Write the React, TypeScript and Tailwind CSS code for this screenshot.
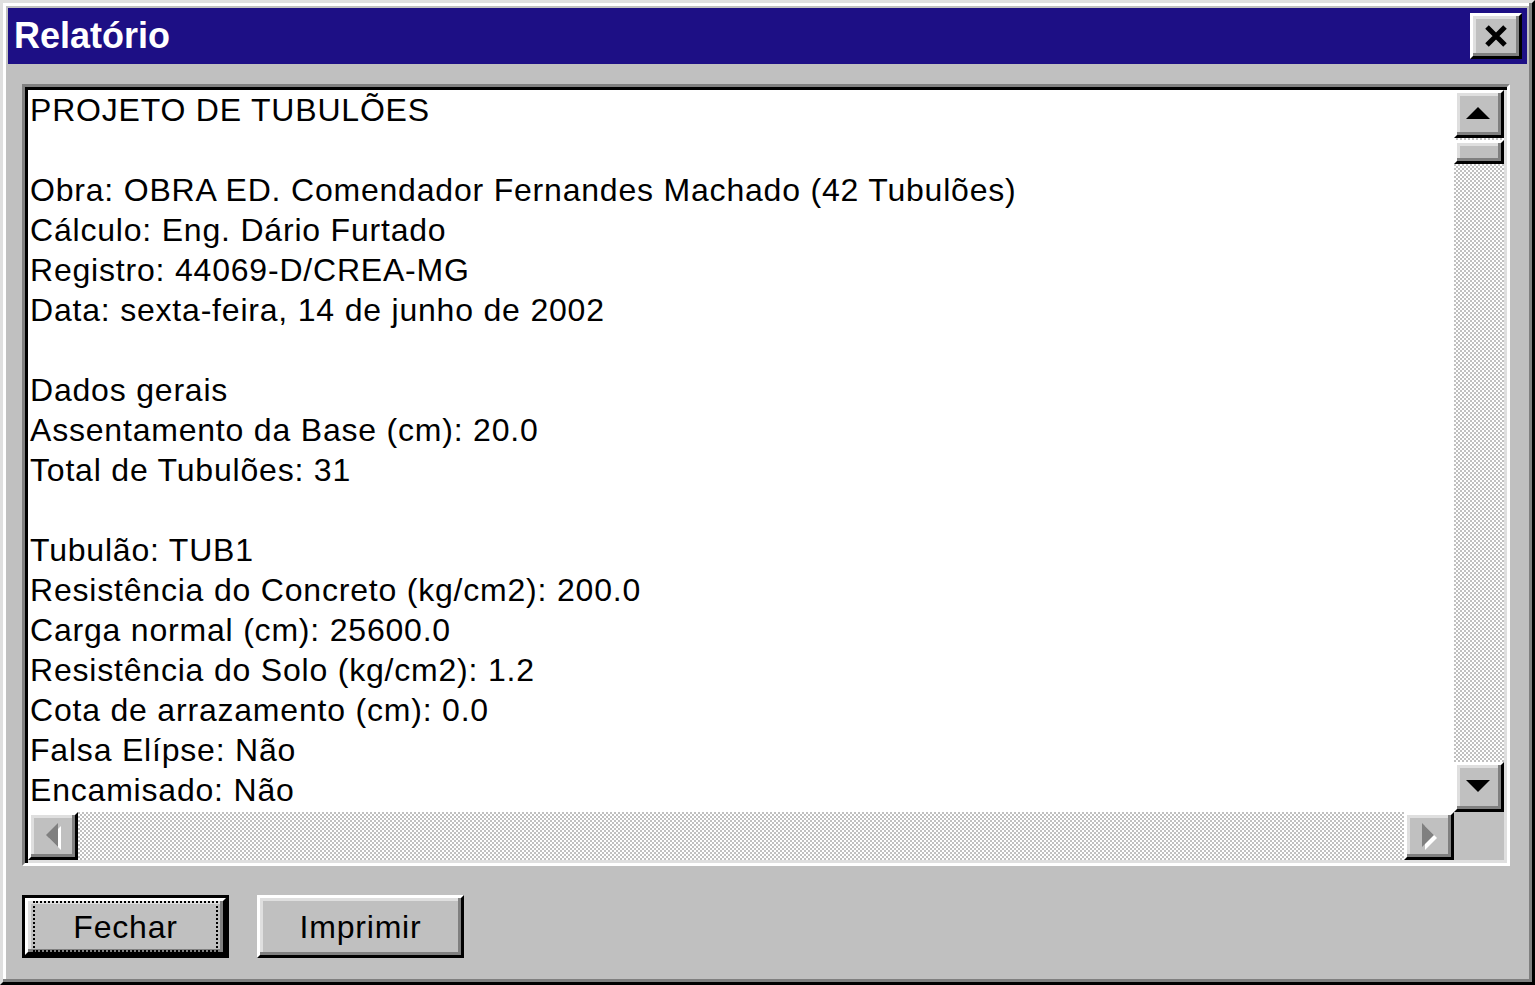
import React from 'react'

const lines = [
  'PROJETO DE TUBULÕES',
  '',
  'Obra: OBRA ED. Comendador Fernandes Machado (42 Tubulões)',
  'Cálculo: Eng. Dário Furtado',
  'Registro: 44069-D/CREA-MG',
  'Data: sexta-feira, 14 de junho de 2002',
  '',
  'Dados gerais',
  'Assentamento da Base (cm): 20.0',
  'Total de Tubulões: 31',
  '',
  'Tubulão: TUB1',
  'Resistência do Concreto (kg/cm2): 200.0',
  'Carga normal (cm): 25600.0',
  'Resistência do Solo (kg/cm2): 1.2',
  'Cota de arrazamento (cm): 0.0',
  'Falsa Elípse: Não',
  'Encamisado: Não',
]

const raised =
  'border-t-[3px] border-l-[3px] border-r-[3px] border-b-[3px] border-t-white border-l-white border-r-black border-b-black bg-[#c0c0c0] shadow-[inset_-3px_-3px_0_#808080,inset_3px_3px_0_#dfdfdf]'

const track = 'bg-[repeating-conic-gradient(#c0c0c0_0_25%,#ffffff_0_50%)] bg-[length:4px_4px]'

function Arrow({ dir, disabled }: { dir: 'up' | 'down' | 'left' | 'right'; disabled?: boolean }) {
  const pts = {
    up: '12,0 24,12 0,12',
    down: '0,0 24,0 12,12',
    left: '12,0 12,24 0,12',
    right: '0,0 12,12 0,24',
  }[dir]
  const vertical = dir === 'up' || dir === 'down'
  const w = vertical ? 24 : 12
  const h = vertical ? 12 : 24
  return (
    <svg width={w + 3} height={h + 3} viewBox={`0 0 ${w + 3} ${h + 3}`}>
      {disabled ? <polygon points={pts} fill="#ffffff" transform="translate(3,3)" /> : null}
      <polygon points={pts} fill={disabled ? '#808080' : '#000000'} />
    </svg>
  )
}

function ScrollButton({ dir, disabled, className }: { dir: 'up' | 'down' | 'left' | 'right'; disabled?: boolean; className: string }) {
  return (
    <div className={`${raised} ${className} flex items-center justify-center`}>
      <Arrow dir={dir} disabled={disabled} />
    </div>
  )
}

function Button({ label, isDefault }: { label: string; isDefault?: boolean }) {
  return (
    <div className={`h-[63px] w-[207px] ${isDefault ? 'border-[3px] border-black' : ''}`}>
      <div className={`${raised} flex h-full w-full items-center justify-center`}>
        <div
          className={`flex h-full w-full items-center justify-center ${isDefault ? 'm-[5px] border-2 border-dotted border-black' : ''}`}
        >
          <span className="text-[32px] tracking-[0.8px] text-black">{label}</span>
        </div>
      </div>
    </div>
  )
}

export default function App() {
  return (
    <div
      className="h-[985px] w-[1535px] overflow-hidden bg-[#c0c0c0]"
      style={{ fontFamily: '"Liberation Sans", Arial, sans-serif' }}
    >
      <div className="h-full w-full border-t-[3px] border-l-[3px] border-r-[3px] border-b-[3px] border-t-[#dfdfdf] border-l-[#dfdfdf] border-r-black border-b-black shadow-[inset_-3px_-3px_0_#808080,inset_3px_3px_0_#ffffff] p-[5px]">
        <div className="flex h-[56px] items-center justify-between bg-[#1d0f85] pl-[6px] pr-[5px]">
          <span className="text-[36px] font-bold leading-none text-white">Relatório</span>
          <div className={`${raised} flex h-[46px] w-[52px] items-center justify-center`}>
            <svg width="24" height="22" viewBox="0 0 24 22">
              <path d="M3 2 L21 20 M21 2 L3 20" stroke="#000" strokeWidth="5" />
            </svg>
          </div>
        </div>

        <div className="ml-[14px] mt-[20px] h-[782px] w-[1488px] border-t-[3px] border-l-[3px] border-r-[3px] border-b-[3px] border-t-[#808080] border-l-[#808080] border-r-white border-b-white shadow-[inset_3px_3px_0_#000000,inset_-3px_-3px_0_#dfdfdf] p-[3px]">
          <div className="grid h-full w-full grid-cols-[1fr_50px] grid-rows-[1fr_48px]">
            <div className="overflow-hidden bg-white pl-[2px]">
              {lines.map((line, i) => (
                <div key={i} className="h-[40px] whitespace-pre text-[32px] leading-[40px] tracking-[0.8px] text-black">
                  {line || ' '}
                </div>
              ))}
            </div>
            <div className={`flex flex-col ${track}`}>
              <ScrollButton dir="up" className="h-[48px] w-full" />
              <div className={`${raised} h-[24px] w-full mt-[2px]`} />
              <div className="flex-1" />
              <ScrollButton dir="down" className="h-[50px] w-full" />
            </div>
            <div className={`flex ${track}`}>
              <ScrollButton dir="left" disabled className="h-full w-[50px]" />
              <div className="flex-1" />
              <ScrollButton dir="right" disabled className="h-full w-[50px]" />
            </div>
            <div className="bg-[#c0c0c0]" />
          </div>
        </div>

        <div className="ml-[14px] mt-[29px] flex gap-[28px]">
          <Button label="Fechar" isDefault />
          <Button label="Imprimir" />
        </div>
      </div>
    </div>
  )
}
